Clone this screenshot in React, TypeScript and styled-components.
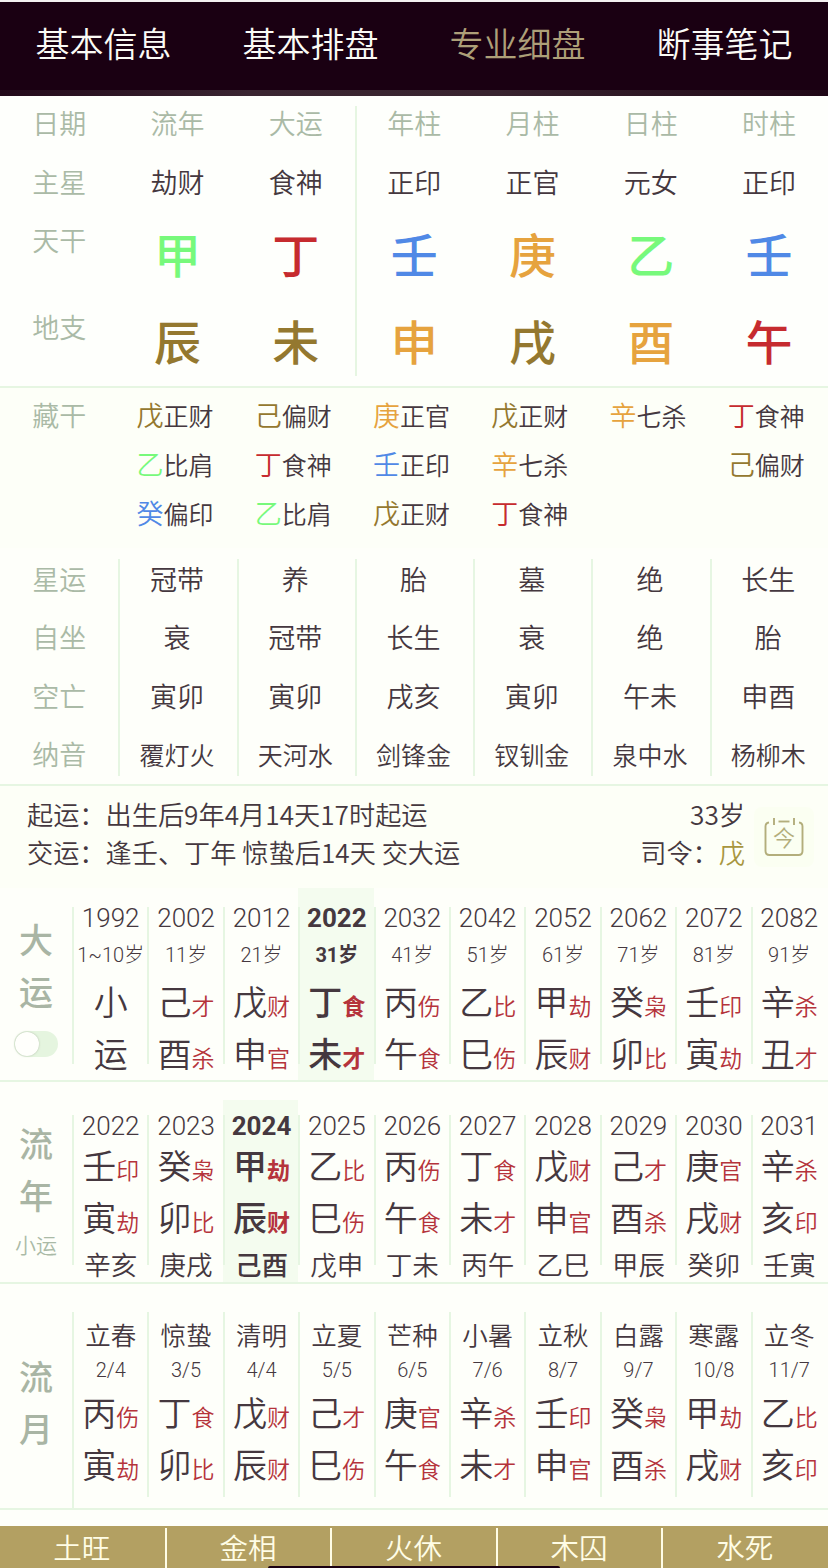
import { ReactNode } from 'react';
import styled, { createGlobalStyle } from 'styled-components';

const GlobalStyle = createGlobalStyle`
  html, body {
    margin: 0;
    padding: 0;
    background: #fefffa;
  }
  * {
    box-sizing: border-box;
  }
`;

const INK = '#45383f';
const LABEL = '#aabaa6';
const LINE = '#e6f6e2';
const RED = '#b5333b';
const THIN = 350;

const ELEMENT: Record<string, string> = {
  甲: '#77f97b',
  乙: '#77f97b',
  丙: '#c62b2f',
  丁: '#c62b2f',
  午: '#c62b2f',
  戊: '#94782f',
  己: '#94782f',
  辰: '#94782f',
  未: '#94782f',
  戌: '#94782f',
  庚: '#e6a33e',
  辛: '#e6a33e',
  申: '#e6a33e',
  酉: '#e6a33e',
  壬: '#5089e6',
  癸: '#5089e6',
};

const tabs = ['基本信息', '基本排盘', '专业细盘', '断事笔记'];

const leftPillars = [
  { head: '日期', star: '主星', stem: '天干', branch: '地支', isLabel: true },
  { head: '流年', star: '劫财', stem: '甲', branch: '辰' },
  { head: '大运', star: '食神', stem: '丁', branch: '未' },
];
const rightPillars = [
  { head: '年柱', star: '正印', stem: '壬', branch: '申' },
  { head: '月柱', star: '正官', stem: '庚', branch: '戌' },
  { head: '日柱', star: '元女', stem: '乙', branch: '酉' },
  { head: '时柱', star: '正印', stem: '壬', branch: '午' },
];

const hidden = [
  ['戊正财', '己偏财', '庚正官', '戊正财', '辛七杀', '丁食神'],
  ['乙比肩', '丁食神', '壬正印', '辛七杀', '', '己偏财'],
  ['癸偏印', '乙比肩', '戊正财', '丁食神', '', ''],
];

const fortuneRows = [
  { label: '星运', cells: ['冠带', '养', '胎', '墓', '绝', '长生'] },
  { label: '自坐', cells: ['衰', '冠带', '长生', '衰', '绝', '胎'] },
  { label: '空亡', cells: ['寅卯', '寅卯', '戌亥', '寅卯', '午未', '申酉'] },
  { label: '纳音', cells: ['覆灯火', '天河水', '剑锋金', '钗钏金', '泉中水', '杨柳木'], small: true },
];

const dayun = [
  ['1992', '1~10岁', '小', '运'],
  ['2002', '11岁', '己才', '酉杀'],
  ['2012', '21岁', '戊财', '申官'],
  ['2022', '31岁', '丁食', '未才'],
  ['2032', '41岁', '丙伤', '午食'],
  ['2042', '51岁', '乙比', '巳伤'],
  ['2052', '61岁', '甲劫', '辰财'],
  ['2062', '71岁', '癸枭', '卯比'],
  ['2072', '81岁', '壬印', '寅劫'],
  ['2082', '91岁', '辛杀', '丑才'],
];

const liunian = [
  ['2022', '壬印', '寅劫', '辛亥'],
  ['2023', '癸枭', '卯比', '庚戌'],
  ['2024', '甲劫', '辰财', '己酉'],
  ['2025', '乙比', '巳伤', '戊申'],
  ['2026', '丙伤', '午食', '丁未'],
  ['2027', '丁食', '未才', '丙午'],
  ['2028', '戊财', '申官', '乙巳'],
  ['2029', '己才', '酉杀', '甲辰'],
  ['2030', '庚官', '戌财', '癸卯'],
  ['2031', '辛杀', '亥印', '壬寅'],
];

const liuyue = [
  ['立春', '2/4', '丙伤', '寅劫'],
  ['惊蛰', '3/5', '丁食', '卯比'],
  ['清明', '4/4', '戊财', '辰财'],
  ['立夏', '5/5', '己才', '巳伤'],
  ['芒种', '6/5', '庚官', '午食'],
  ['小暑', '7/6', '辛杀', '未才'],
  ['立秋', '8/7', '壬印', '申官'],
  ['白露', '9/7', '癸枭', '酉杀'],
  ['寒露', '10/8', '甲劫', '戌财'],
  ['立冬', '11/7', '乙比', '亥印'],
];

const footer = ['土旺', '金相', '火休', '木囚', '水死'];

function GanCell({ text, bold }: { text: string; bold?: boolean }): JSX.Element {
  return (
    <GanRow>
      <GanChar $bold={bold}>{text[0]}</GanChar>
      {text[1] && <GanTag $bold={bold}>{text[1]}</GanTag>}
    </GanRow>
  );
}

function SideLabel(props: { text: string[]; top: number; ruled?: boolean; children?: ReactNode }): JSX.Element {
  return (
    <SideColumn $top={props.top} $ruled={props.ruled}>
      {props.text.map((t) => (
        <SideChar key={t}>{t}</SideChar>
      ))}
      {props.children}
    </SideColumn>
  );
}

export default function App(): JSX.Element {
  return (
    <Page>
      <GlobalStyle />
      <Header>
        <TabRow>
          {tabs.map((t, i) => (
            <Tab key={t} $active={i === 2}>
              {t}
            </Tab>
          ))}
        </TabRow>
        <HeaderEdge />
      </Header>

      <PillarSection>
        <PillarBlock $columns={3} $ruled>
          {leftPillars.map((p) => (
            <PillarColumn key={p.head}>
              <PillarCell $label>{p.head}</PillarCell>
              <PillarCell $label={p.isLabel}>{p.star}</PillarCell>
              {p.isLabel ? (
                <>
                  <SideCell>{p.stem}</SideCell>
                  <SideCell>{p.branch}</SideCell>
                </>
              ) : (
                <>
                  <BigGan $color={ELEMENT[p.stem]}>{p.stem}</BigGan>
                  <BigGan $color={ELEMENT[p.branch]}>{p.branch}</BigGan>
                </>
              )}
            </PillarColumn>
          ))}
        </PillarBlock>
        <PillarBlock $columns={4}>
          {rightPillars.map((p) => (
            <PillarColumn key={p.head}>
              <PillarCell $label>{p.head}</PillarCell>
              <PillarCell>{p.star}</PillarCell>
              <BigGan $color={ELEMENT[p.stem]}>{p.stem}</BigGan>
              <BigGan $color={ELEMENT[p.branch]}>{p.branch}</BigGan>
            </PillarColumn>
          ))}
        </PillarBlock>
      </PillarSection>

      <HiddenSection>
        {hidden.map((row, r) => (
          <HiddenRow key={r}>
            <HiddenLabel>{r === 0 ? '藏干' : ''}</HiddenLabel>
            {row.map((cell, c) => (
              <HiddenCell key={c}>
                <HiddenGan $color={ELEMENT[cell[0]]}>{cell[0]}</HiddenGan>
                {cell.slice(1)}
              </HiddenCell>
            ))}
          </HiddenRow>
        ))}
      </HiddenSection>

      <FortuneSection>
        <FortuneGrid>
          {fortuneRows.map((row) => (
            <FortuneLabel key={row.label}>{row.label}</FortuneLabel>
          ))}
        </FortuneGrid>
        {[0, 1, 2, 3, 4, 5].map((c) => (
          <FortuneGrid key={c} $ruled>
            {fortuneRows.map((row) => (
              <FortuneCell key={row.label} $small={row.small}>
                {row.cells[c]}
              </FortuneCell>
            ))}
          </FortuneGrid>
        ))}
      </FortuneSection>

      <InfoSection>
        <InfoLines>
          <InfoLine>起运：出生后9年4月14天17时起运</InfoLine>
          <InfoLine>交运：逢壬、丁年 惊蛰后14天 交大运</InfoLine>
        </InfoLines>
        <InfoRight>
          <InfoLine>33岁</InfoLine>
          <InfoLine>
            司令：<SiLing>戊</SiLing>
          </InfoLine>
        </InfoRight>
        <TodayCard>
          <svg width="42" height="42" viewBox="0 0 42 42" fill="none" stroke="#b3ae7c" strokeWidth="1.9">
            <path d="M6 6.500 Q2.500 7 2.500 10.500 V35 Q2.500 39 6.500 39 H35.500 Q39.500 39 39.500 35 V10.500 Q39.500 7 36 6.500" />
            <path d="M11 2 V9 M31 2 V9" />
            <path d="M15.500 5.500 H26.500" />
            <text x="21" y="30" textAnchor="middle" fontSize="22" fill="#b3ae7c" stroke="none" fontFamily="Noto Sans CJK SC, sans-serif">
              今
            </text>
          </svg>
        </TodayCard>
      </InfoSection>

      <TableSection $height={194}>
        <SideLabel text={['大', '运']} top={25}>
          <Toggle>
            <Knob />
          </Toggle>
        </SideLabel>
        {dayun.map((d, i) => {
          const on = i === 3;
          return (
            <YearColumn key={d[0]} $on={on} $gap={0} $pad={19}>
              <YearStack $height={157}>
                <YearText $bold={on}>{d[0]}</YearText>
                <SmallText $bold={on} $mt={15}>
                  {d[1]}
                </SmallText>
                <RowGap $mt={15}>
                  <GanCell text={d[2]} bold={on} />
                </RowGap>
                <RowGap $mt={8}>
                  <GanCell text={d[3]} bold={on} />
                </RowGap>
              </YearStack>
            </YearColumn>
          );
        })}
      </TableSection>

      <TableSection $height={202}>
        <SideLabel text={['流', '年']} top={35}>
          <SmallRun>小运</SmallRun>
        </SideLabel>
        {liunian.map((d, i) => {
          const on = i === 2;
          return (
            <YearColumn key={d[0]} $on={on} $gap={18} $pad={15}>
              <YearStack $height={150}>
                <YearText $bold={on}>{d[0]}</YearText>
                <RowGap $mt={8}>
                  <GanCell text={d[1]} bold={on} />
                </RowGap>
                <RowGap $mt={8}>
                  <GanCell text={d[2]} bold={on} />
                </RowGap>
                <PairText $bold={on}>{d[3]}</PairText>
              </YearStack>
            </YearColumn>
          );
        })}
      </TableSection>

      <TableSection $height={226}>
        <SideLabel text={['流', '月']} top={66} ruled />
        {liuyue.map((d, i) => (
          <YearColumn key={d[0]} $gap={0} $pad={28}>
            <YearStack $height={185} $pad={9} $noRule={i === 0}>
              <TermText>{d[0]}</TermText>
              <SmallText $mt={8}>{d[1]}</SmallText>
              <RowGap $mt={11}>
                <GanCell text={d[2]} />
              </RowGap>
              <RowGap $mt={8}>
                <GanCell text={d[3]} />
              </RowGap>
            </YearStack>
          </YearColumn>
        ))}
      </TableSection>

      <FooterBar>
        {footer.map((f, i) => (
          <FooterCell key={f} $first={i === 0}>
            {f}
          </FooterCell>
        ))}
        <HomeBar />
      </FooterBar>
    </Page>
  );
}

const Page = styled.div`
  position: relative;
  width: 828px;
  height: 1568px;
  overflow: hidden;
  background: #fefffa;
  color: ${INK};
  font-family: 'Noto Sans CJK SC', sans-serif;
  font-weight: ${THIN};
`;

const Header = styled.header`
  height: 96px;
  background: #1a0012;
  border-top: 2px solid #f3f0f0;
  display: flex;
  flex-direction: column;
`;

const TabRow = styled.nav`
  flex: 1;
  display: grid;
  grid-template-columns: repeat(4, 1fr);
  align-items: center;
  padding-bottom: 7px;
`;

const Tab = styled.div<{ $active?: boolean }>`
  text-align: center;
  font-size: 34px;
  line-height: 44px;
  color: ${({ $active }) => ($active ? '#ad9f78' : '#fbfbf6')};
`;

const HeaderEdge = styled.div`
  height: 6px;
  background: linear-gradient(90deg, #22091a 0%, #3a2531 30%, #38242f 60%, #1f0716 100%);
`;

const PillarSection = styled.section`
  display: flex;
  height: 292px;
  padding: 10px 0;
  border-bottom: 2px solid ${LINE};
  background: #fefffc;
`;

const PillarBlock = styled.div<{ $columns: number; $ruled?: boolean }>`
  display: grid;
  grid-template-columns: repeat(${({ $columns }) => $columns}, 118.3px);
  height: 270px;
  flex: none;
  ${({ $ruled }) =>
    $ruled &&
    `
    width: 357px;
    margin-right: -2px;
    border-right: 2px solid ${LINE};
  `}
`;

const PillarColumn = styled.div`
  display: grid;
  grid-template-rows: 36px 36px 64px 65px;
  row-gap: 23px;
  justify-items: center;
`;

const PillarCell = styled.div<{ $label?: boolean }>`
  font-size: 27px;
  line-height: 34px;
  color: ${({ $label }) => ($label ? LABEL : INK)};
`;

const SideCell = styled.div`
  font-size: 27px;
  line-height: 32px;
  color: ${LABEL};
`;

const BigGan = styled.div<{ $color: string }>`
  font-size: 47px;
  line-height: 58px;
  font-weight: 500;
  color: ${({ $color }) => $color};
`;

const HiddenSection = styled.section`
  height: 160px;
  padding-top: 2px;
  background: #fdfff8;
`;

const HiddenRow = styled.div`
  display: grid;
  grid-template-columns: repeat(7, 1fr);
  height: 49px;
  align-items: center;
`;

const HiddenLabel = styled.div`
  text-align: center;
  font-size: 27px;
  color: ${LABEL};
`;

const HiddenCell = styled.div`
  padding-right: 5px;
  text-align: center;
  font-size: 25px;
  line-height: 36px;
  white-space: nowrap;
`;

const HiddenGan = styled.span<{ $color?: string }>`
  font-size: 27px;
  color: ${({ $color }) => $color};
`;

const FortuneSection = styled.section`
  display: grid;
  grid-template-columns: repeat(7, 1fr);
  height: 238px;
  padding-top: 11px;
  border-bottom: 2px solid ${LINE};
`;

const FortuneGrid = styled.div<{ $ruled?: boolean }>`
  display: grid;
  grid-template-rows: repeat(4, 42px);
  row-gap: 16.3px;
  height: 217px;
  border-left: ${({ $ruled }) => ($ruled ? `2px solid ${LINE}` : 'none')};
`;

const FortuneLabel = styled.div`
  text-align: center;
  font-size: 27px;
  line-height: 40px;
  color: ${LABEL};
`;

const FortuneCell = styled.div<{ $small?: boolean }>`
  padding-right: 3px;
  text-align: center;
  font-size: ${({ $small }) => ($small ? '25px' : '27px')};
  line-height: 40px;
  white-space: nowrap;
`;

const InfoSection = styled.section`
  display: flex;
  height: 102px;
  padding: 9px 14px 0 27px;
  background: #fdfff7;
`;

const InfoLines = styled.div`
  flex: 1;
`;

const InfoLine = styled.div`
  font-size: 26.200px;
  line-height: 38px;
  white-space: nowrap;
`;

const InfoRight = styled.div`
  text-align: right;
  margin-right: 9px;
`;

const SiLing = styled.span`
  color: #a8963f;
`;

const TodayCard = styled.div`
  width: 60px;
  height: 60px;
  margin-top: 12px;
  border-radius: 8px;
  background: #fbfff2;
  display: flex;
  align-items: center;
  justify-content: center;
`;

const TableSection = styled.section<{ $height: number }>`
  display: flex;
  height: ${({ $height }) => $height}px;
  border-bottom: 2px solid ${LINE};
`;

const SideColumn = styled.div<{ $top: number; $ruled?: boolean }>`
  flex: 0 0 72px;
  display: flex;
  flex-direction: column;
  align-items: center;
  padding-top: ${({ $top }) => $top}px;
  ${({ $ruled }) =>
    $ruled &&
    `
    flex-basis: 74px;
    margin: 28px -2px 0 0;
    padding-top: 38px;
    border-right: 2px solid ${LINE};
  `}
`;

const SideChar = styled.div`
  font-size: 34px;
  line-height: 52px;
  font-weight: 500;
  color: #a9b5a4;
`;

const SmallRun = styled.div`
  margin-top: 8px;
  font-size: 21px;
  line-height: 30px;
  color: ${LABEL};
`;

const Toggle = styled.div`
  width: 44px;
  height: 26px;
  margin-top: 14px;
  padding: 1px;
  border-radius: 13px;
  background: #e5f5df;
`;

const Knob = styled.div`
  width: 24px;
  height: 24px;
  border-radius: 50%;
  background: #fffffc;
  box-shadow: 0 0 2px rgba(120, 130, 110, 0.5);
`;

const YearColumn = styled.div<{ $on?: boolean; $gap: number; $pad: number }>`
  flex: 0 0 75.4px;
  min-width: 0;
  margin-top: ${({ $gap }) => $gap}px;
  padding-top: ${({ $pad }) => $pad}px;
  background: ${({ $on }) => ($on ? '#f4fcef' : 'transparent')};
`;

const YearStack = styled.div<{ $height: number; $pad?: number; $noRule?: boolean }>`
  height: ${({ $height }) => $height}px;
  padding-top: ${({ $pad }) => $pad ?? 0}px;
  border-left: 2px solid ${({ $noRule }) => ($noRule ? 'transparent' : LINE)};
  display: flex;
  flex-direction: column;
  align-items: center;
`;

const YearText = styled.div<{ $bold?: boolean }>`
  height: 22px;
  flex: none;
  font-family: Roboto, 'Noto Sans CJK SC', sans-serif;
  font-size: 26px;
  line-height: 22px;
  font-weight: ${({ $bold }) => ($bold ? 700 : 300)};
`;

const SmallText = styled.div<{ $bold?: boolean; $mt: number }>`
  height: 22px;
  flex: none;
  margin-top: ${({ $mt }) => $mt}px;
  font-family: Roboto, 'Noto Sans CJK SC', sans-serif;
  font-size: 20px;
  line-height: 22px;
  white-space: nowrap;
  font-weight: ${({ $bold }) => ($bold ? 700 : 300)};
`;

const TermText = styled.div`
  height: 30px;
  flex: none;
  font-size: 25.500px;
  line-height: 26px;
  white-space: nowrap;
`;

const PairText = styled.div<{ $bold?: boolean }>`
  height: 28px;
  flex: none;
  margin-top: 10px;
  font-size: 26.500px;
  line-height: 26px;
  white-space: nowrap;
  font-weight: ${({ $bold }) => ($bold ? 500 : THIN)};
`;

const RowGap = styled.div<{ $mt: number }>`
  height: 44px;
  flex: none;
  margin-top: ${({ $mt }) => $mt}px;
`;

const GanRow = styled.div`
  display: flex;
  align-items: center;
  justify-content: center;
  height: 44px;
  padding-bottom: 4px;
`;

const GanChar = styled.span<{ $bold?: boolean }>`
  font-size: 34px;
  line-height: 40px;
  font-weight: ${({ $bold }) => ($bold ? 500 : THIN)};
`;

const GanTag = styled.span<{ $bold?: boolean }>`
  font-size: 23px;
  line-height: 40px;
  margin-top: 7px;
  color: ${RED};
  font-weight: ${({ $bold }) => ($bold ? 700 : THIN)};
`;

const FooterBar = styled.footer`
  position: absolute;
  left: 0;
  right: 0;
  bottom: 0;
  height: 42px;
  display: grid;
  grid-template-columns: repeat(5, 1fr);
  background: #b3a062;
`;

const FooterCell = styled.div<{ $first?: boolean }>`
  margin: 2px 0 0 ${({ $first }) => ($first ? '0' : '-1px')};
  padding-right: 2px;
  text-align: center;
  font-size: 28.500px;
  line-height: 38px;
  color: #fffde6;
  border-left: ${({ $first }) => ($first ? 'none' : '2px solid #fffde6')};
`;

const HomeBar = styled.div`
  position: absolute;
  left: 268px;
  bottom: 0;
  width: 292px;
  height: 2px;
  border-radius: 2px 2px 0 0;
  background: #1a0012;
`;
